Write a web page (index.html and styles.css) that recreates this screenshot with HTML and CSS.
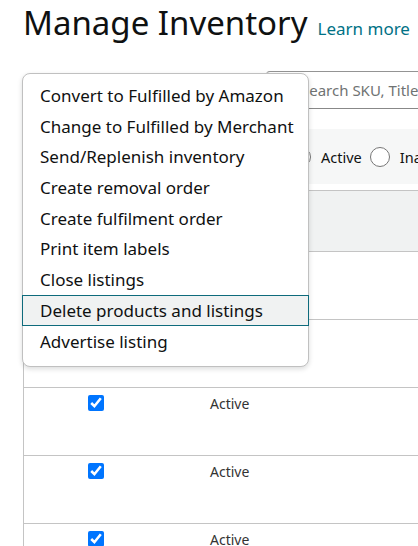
FILE: index.html
```html
<!DOCTYPE html>
<html lang="en">
  <head>
    <meta charset="UTF-8" />
    <meta name="viewport" content="width=device-width, initial-scale=1.0" />
    <title>Manage Inventory</title>
    <link rel="stylesheet" href="styles.css">
  </head>
  <body>
    <div class="page">
      <div class="heading">
        <h1>Manage Inventory</h1>
        <a class="learn" href="#">Learn more</a>
      </div>

      <div class="toolbar">
        <button class="bulk"></button>
        <div class="search">
          <input type="text" placeholder="Search SKU, Title, ISBN, ASIN" />
        </div>
      </div>

      <div class="filters">
        <label class="radio"><input type="radio" name="status" /> Active</label>
        <label class="radio"><input type="radio" name="status" /> Inactive</label>
      </div>

      <div class="grid">
        <div class="row head">
          <div class="cell"></div>
          <div class="cell"></div>
          <div class="cell"></div>
        </div>
        <div class="row">
          <div class="cell check"><input type="checkbox" checked /></div>
          <div class="cell status">Active</div>
          <div class="cell"></div>
        </div>
        <div class="row">
          <div class="cell check"><input type="checkbox" checked /></div>
          <div class="cell status">Active</div>
          <div class="cell"></div>
        </div>
        <div class="row">
          <div class="cell check"><input type="checkbox" checked /></div>
          <div class="cell status">Active</div>
          <div class="cell"></div>
        </div>
        <div class="row">
          <div class="cell check"><input type="checkbox" checked /></div>
          <div class="cell status">Active</div>
          <div class="cell"></div>
        </div>
        <div class="row">
          <div class="cell check"><input type="checkbox" checked /></div>
          <div class="cell status">Active</div>
          <div class="cell"></div>
        </div>
      </div>

      <!-- bulk action dropdown, open -->
      <ul class="menu">
        <li>Convert to Fulfilled by Amazon</li>
        <li>Change to Fulfilled by Merchant</li>
        <li>Send/Replenish inventory</li>
        <li>Create removal order</li>
        <li>Create fulfilment order</li>
        <li>Print item labels</li>
        <li>Close listings</li>
        <li class="active">Delete products and listings</li>
        <li>Advertise listing</li>
      </ul>
    </div>
  </body>
</html>
```

FILE: styles.css
```css
body {
  margin: 0;
  font-family: "Noto Sans", Arial, sans-serif;
  color: #0f1111;
  overflow: hidden;
}

.page {
  position: relative;
  padding-left: 23px;
  width: 700px;
}

.heading {
  display: flex;
  align-items: baseline;
  gap: 10px;
  height: 71px;
}

h1 {
  margin: 0;
  font-size: 33px;
  font-weight: 400;
  line-height: 46px;
}

.learn {
  color: #007185;
  font-size: 17px;
  text-decoration: none;
}

.toolbar {
  display: flex;
  align-items: center;
  gap: 20px;
  height: 38px;
}

.bulk {
  width: 223px;
  height: 31px;
  border: 1px solid #d5d9d9;
  border-radius: 8px;
  background: #fff;
}

.search {
  width: 400px;
  height: 38px;
  box-sizing: border-box;
  border: 1px solid #a6a6a6;
  border-top-color: #949494;
  border-bottom-color: #888;
  border-radius: 4px 4px 0 0;
}

.search input {
  border: none;
  outline: none;
  height: 36px;
  padding: 0 0 0 34px;
  font-family: inherit;
  font-size: 15px;
  background: transparent;
}

.search input::placeholder {
  color: #6f7373;
}

.filters {
  display: flex;
  align-items: center;
  gap: 8px;
  margin-top: 20px;
  height: 55px;
  padding-left: 268px;
  background: #f6f7f7;
  font-size: 14.5px;
}

.radio {
  display: flex;
  align-items: center;
  gap: 10px;
}

.radio input {
  width: 20px;
  height: 20px;
  margin: 0;
  accent-color: #007185;
}

.grid {
  margin-top: 6px;
  border-left: 1px solid #c4c4c4;
  border-top: 1px solid #c4c4c4;
}

.row {
  display: grid;
  grid-template-columns: 144px 120px 1fr;
  height: 67px;
  border-bottom: 1px solid #c4c4c4;
  font-size: 14px;
}

.row.head {
  height: 60px;
  background: #f0f2f2;
}

.cell {
  padding-top: 6px;
}

.check {
  text-align: center;
}

.check input {
  width: 16px;
  height: 16px;
  margin: 1px 0 0 0;
}

.status {
  padding-left: 42px;
  color: #333;
}

.menu {
  position: absolute;
  left: 22px;
  top: 73px;
  width: 287px;
  margin: 0;
  padding: 6px 0 10px;
  list-style: none;
  background: #fff;
  border: 1px solid #c0c0c0;
  border-radius: 8px;
  box-shadow: 0 2px 5px rgba(15, 17, 17, 0.15);
  box-sizing: border-box;
}

.menu li {
  height: 30.7px;
  line-height: 30px;
  padding-left: 17px;
  font-size: 17px;
  box-sizing: border-box;
  border: 1px solid transparent;
  border-left: none;
  border-right: none;
}

.menu li.active {
  background: #f0f2f2;
  border: 1px solid #0e6b7c;
  margin: 0 -1px;
}
```
